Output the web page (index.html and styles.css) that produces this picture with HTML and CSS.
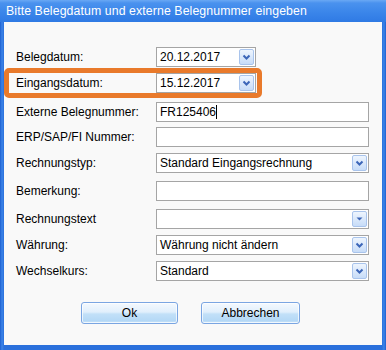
FILE: index.html
```html
<!DOCTYPE html>
<html lang="de">
<head>
    <meta charset="UTF-8">
    <title>Bitte Belegdatum und externe Belegnummer eingeben</title>
    <link rel="stylesheet" href="styles.css">
</head>
<body>
    <div class="window">
        <div class="titlebar">Bitte Belegdatum und externe Belegnummer eingeben</div>
        <div class="content">
            <div class="form">
                <div class="row">
                    <label>Belegdatum:</label>
                    <div class="field short combo"><span>20.12.2017</span>
                        <span class="drop"><svg width="15" height="16" viewBox="0 0 15 16"><path d="M4.5 6.5 L7.5 9.5 L10.5 6.5" fill="none" stroke="#3c66b8" stroke-width="2"/></svg></span>
                    </div>
                </div>
                <div class="row marked">
                    <label>Eingangsdatum:</label>
                    <div class="field short combo"><span>15.12.2017</span>
                        <span class="drop"><svg width="15" height="16" viewBox="0 0 15 16"><path d="M4.5 6.5 L7.5 9.5 L10.5 6.5" fill="none" stroke="#3c66b8" stroke-width="2"/></svg></span>
                    </div>
                </div>
                <div class="row after-mark">
                    <label>Externe Belegnummer:</label>
                    <div class="field"><span>FR125406</span><span class="caret"></span></div>
                </div>
                <div class="row tight">
                    <label>ERP/SAP/FI Nummer:</label>
                    <div class="field"></div>
                </div>
                <div class="row">
                    <label>Rechnungstyp:</label>
                    <div class="field combo"><span>Standard Eingangsrechnung</span>
                        <span class="drop"><svg width="15" height="16" viewBox="0 0 15 16"><path d="M4.5 6.5 L7.5 9.5 L10.5 6.5" fill="none" stroke="#3c66b8" stroke-width="2"/></svg></span>
                    </div>
                </div>
                <div class="row wide-gap">
                    <label>Bemerkung:</label>
                    <div class="field"></div>
                </div>
                <div class="row wide-gap">
                    <label>Rechnungstext</label>
                    <div class="field combo"><span></span>
                        <span class="drop"><svg width="15" height="16" viewBox="0 0 15 16"><path d="M4.5 6.5 L10.5 6.5 L7.5 9.5 Z" fill="#3c66b8"/></svg></span>
                    </div>
                </div>
                <div class="row">
                    <label>Währung:</label>
                    <div class="field combo"><span>Währung nicht ändern</span>
                        <span class="drop"><svg width="15" height="16" viewBox="0 0 15 16"><path d="M4.5 6.5 L7.5 9.5 L10.5 6.5" fill="none" stroke="#3c66b8" stroke-width="2"/></svg></span>
                    </div>
                </div>
                <div class="row">
                    <label>Wechselkurs:</label>
                    <div class="field combo"><span>Standard</span>
                        <span class="drop"><svg width="15" height="16" viewBox="0 0 15 16"><path d="M4.5 6.5 L7.5 9.5 L10.5 6.5" fill="none" stroke="#3c66b8" stroke-width="2"/></svg></span>
                    </div>
                </div>
            </div>
            <div class="buttons">
                <button class="ok">Ok</button>
                <button class="cancel">Abbrechen</button>
            </div>
        </div>
    </div>
</body>
</html>
```

FILE: styles.css
```css
body {
    margin: 0;
    font-family: "Liberation Sans", Arial, sans-serif;
    font-size: 12px;
    color: #000;
}
.window {
    width: 386px;
    height: 350px;
    box-sizing: border-box;
    display: flex;
    flex-direction: column;
    padding: 0 4px 5px 4px;
    background: linear-gradient(to right, #1d5fd0 0, #3c84e8 2px, #2a70dc 4px, #2a70dc 382px, #3c84e8 384px, #1d5fd0 386px);
}
.titlebar {
    height: 22px;
    line-height: 22px;
    margin: 0 -4px;
    padding-left: 6px;
    color: #fff;
    font-size: 12.3px;
    letter-spacing: 0.1px;
    background: linear-gradient(to bottom, #6aa8f4 0, #4a92ee 3px, #3b86ea 12px, #2f7ae4 22px);
}
.content {
    flex: 1;
    background: #f9f9f9;
    padding: 25px 13px 0 12px;
}
.form {
    display: flex;
    flex-direction: column;
}
.row {
    display: flex;
    align-items: center;
    height: 20px;
    margin-top: 6px;
}
.row:first-child { margin-top: 0; }
.row.after-mark { margin-top: 9px; }
.row.tight { margin-top: 5px; }
.row.wide-gap { margin-top: 8px; }
.row label {
    width: 140px;
    flex-shrink: 0;
}
.marked {
    position: relative;
}
.marked::before {
    content: "";
    position: absolute;
    left: -12px;
    top: -5px;
    width: 258px;
    height: 30px;
    box-sizing: border-box;
    border: 5px solid #e97a2b;
    border-radius: 5px;
}
.field {
    width: 213px;
    height: 20px;
    box-sizing: border-box;
    border: 1px solid #a5a5a5;
    background: #fff;
    display: flex;
    align-items: center;
    padding-left: 3px;
}
.field.short { width: 100px; }
.combo { justify-content: space-between; padding-right: 1px; }
.drop {
    width: 15px;
    height: 16px;
    box-sizing: border-box;
    border: 1px solid #a9c4ec;
    border-radius: 2px;
    background: linear-gradient(to bottom, #eef5fe, #c7dcf8);
    display: flex;
}
.drop svg { margin: -1px; }
.caret {
    width: 1px;
    height: 14px;
    background: #000;
}
.buttons {
    display: flex;
    justify-content: center;
    gap: 23px;
    margin-top: 21px;
    padding-right: 4px;
}
button {
    height: 22px;
    font-family: inherit;
    font-size: 12px;
    color: #000;
    border: 1px solid #7aa5e2;
    border-radius: 3px;
    background: linear-gradient(to bottom, #f4f9fe 0, #e1effc 45%, #c2e0f8 55%, #b4d8f6 90%, #d9ecfb 100%);
    box-shadow: inset 0 0 0 1px rgba(255,255,255,0.7);
    padding: 0;
}
.ok { width: 97px; }
.cancel { width: 99px; }
```
